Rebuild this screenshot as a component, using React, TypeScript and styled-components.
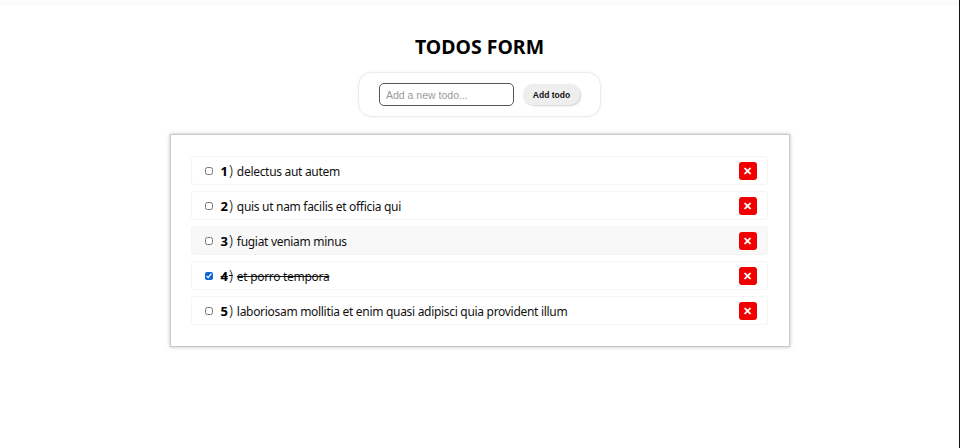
import React, { useState } from "react";
import styled, { createGlobalStyle } from "styled-components";

const GlobalStyle = createGlobalStyle`
  html, body { margin: 0; padding: 0; background: #ffffff; }
  body { font-family: "Noto Sans", "Open Sans", sans-serif; color: #111; }
`;

const Page = styled.div`
  width: 960px;
  height: 448px;
  box-sizing: border-box;
  border-right: 1px solid #111111;
  background: linear-gradient(#fbfbfb 0, #fbfbfb 6px, #ffffff 6px);
  display: flex;
  flex-direction: column;
  align-items: center;
`;

const Title = styled.h1`
  margin: 33px 0 0;
  font-size: 19.5px;
  line-height: 27px;
  font-weight: 700;
  color: #000;
`;

const Form = styled.form`
  margin-top: 12px;
  width: 243px;
  height: 45px;
  box-sizing: border-box;
  display: flex;
  align-items: center;
  padding: 0 20px;
  gap: 9px;
  border-radius: 14px;
  border: 1px solid #ececec;
  box-shadow: 0 0 3px rgba(0, 0, 0, 0.06);
  background: #fff;
`;

const Input = styled.input`
  width: 135px;
  height: 23px;
  box-sizing: border-box;
  border: 1px solid #555;
  border-radius: 5px;
  padding: 0 6px;
  font-family: "Liberation Sans", Arial, sans-serif;
  font-size: 10.5px;
  color: #222;
  outline: none;
  &::placeholder { color: #9a9a9a; }
`;

const AddButton = styled.button`
  width: 59px;
  height: 21px;
  border: none;
  border-radius: 10px;
  background: #eeeeee;
  box-shadow: 1px 1px 2px rgba(0, 0, 0, 0.18);
  font-family: "Liberation Sans", Arial, sans-serif;
  font-weight: 700;
  font-size: 8.5px;
  color: #111;
  padding: 0;
  cursor: pointer;
`;

const Panel = styled.div`
  margin-top: 17px;
  width: 620px;
  box-sizing: border-box;
  padding: 21px 21px 21px 20px;
  border: 1px solid #c8c8c8;
  box-shadow: 0 0 4px rgba(0, 0, 0, 0.25);
  background: #fff;
  display: flex;
  flex-direction: column;
  gap: 6px;
`;

const Row = styled.div<{ $shade?: boolean }>`
  height: 29px;
  box-sizing: border-box;
  display: flex;
  align-items: center;
  padding: 0 10px 0 13px;
  border: 1px solid #f5f5f5;
  border-radius: 3px;
  background: ${(p) => (p.$shade ? "#f8f8f8" : "#fff")};
`;

const Check = styled.input`
  width: 8px;
  height: 8px;
  margin: 0 8px 0 0;
  accent-color: #0a66d8;
`;

const Num = styled.span`
  font-weight: 700;
  font-size: 13px;
  color: #000;
  letter-spacing: 0;
`;

const Paren = styled.span`
  font-size: 14px;
  font-weight: 300;
  margin: 0 4px 0 1px;
  color: #000;
  letter-spacing: 0;
`;

const Label = styled.span<{ $done?: boolean }>`
  flex: 1;
  font-size: 12px;
  letter-spacing: -0.3px;
  color: #111;
  text-decoration: ${(p) => (p.$done ? "line-through" : "none")};
  display: flex;
  align-items: baseline;
`;

const Delete = styled.button`
  width: 18px;
  height: 18px;
  padding: 0;
  border: none;
  border-radius: 3px;
  background: #f00000;
  color: #fff;
  font-family: "Liberation Sans", Arial, sans-serif;
  font-weight: 700;
  font-size: 11px;
  line-height: 18px;
  display: flex;
  align-items: center;
  justify-content: center;
  cursor: pointer;
`;

const initial = [
  { id: 1, title: "delectus aut autem", done: false },
  { id: 2, title: "quis ut nam facilis et officia qui", done: false },
  { id: 3, title: "fugiat veniam minus", done: false },
  { id: 4, title: "et porro tempora", done: true },
  { id: 5, title: "laboriosam mollitia et enim quasi adipisci quia provident illum", done: false },
];

export default function App() {
  const [todos, setTodos] = useState(initial);
  return (
    <>
      <GlobalStyle />
      <Page>
        <Title>TODOS FORM</Title>
        <Form onSubmit={(e) => e.preventDefault()}>
          <Input placeholder="Add a new todo..." />
          <AddButton type="submit">Add todo</AddButton>
        </Form>
        <Panel>
          {todos.map((t, i) => (
            <Row key={t.id} $shade={i === 2}>
              <Check
                type="checkbox"
                checked={t.done}
                onChange={() =>
                  setTodos((ts) => ts.map((x) => (x.id === t.id ? { ...x, done: !x.done } : x)))
                }
              />
              <Label $done={t.done}>
                <Num>{i + 1}</Num>
                <Paren>)</Paren>
                {t.title}
              </Label>
              <Delete aria-label="delete">✕</Delete>
            </Row>
          ))}
        </Panel>
      </Page>
    </>
  );
}
